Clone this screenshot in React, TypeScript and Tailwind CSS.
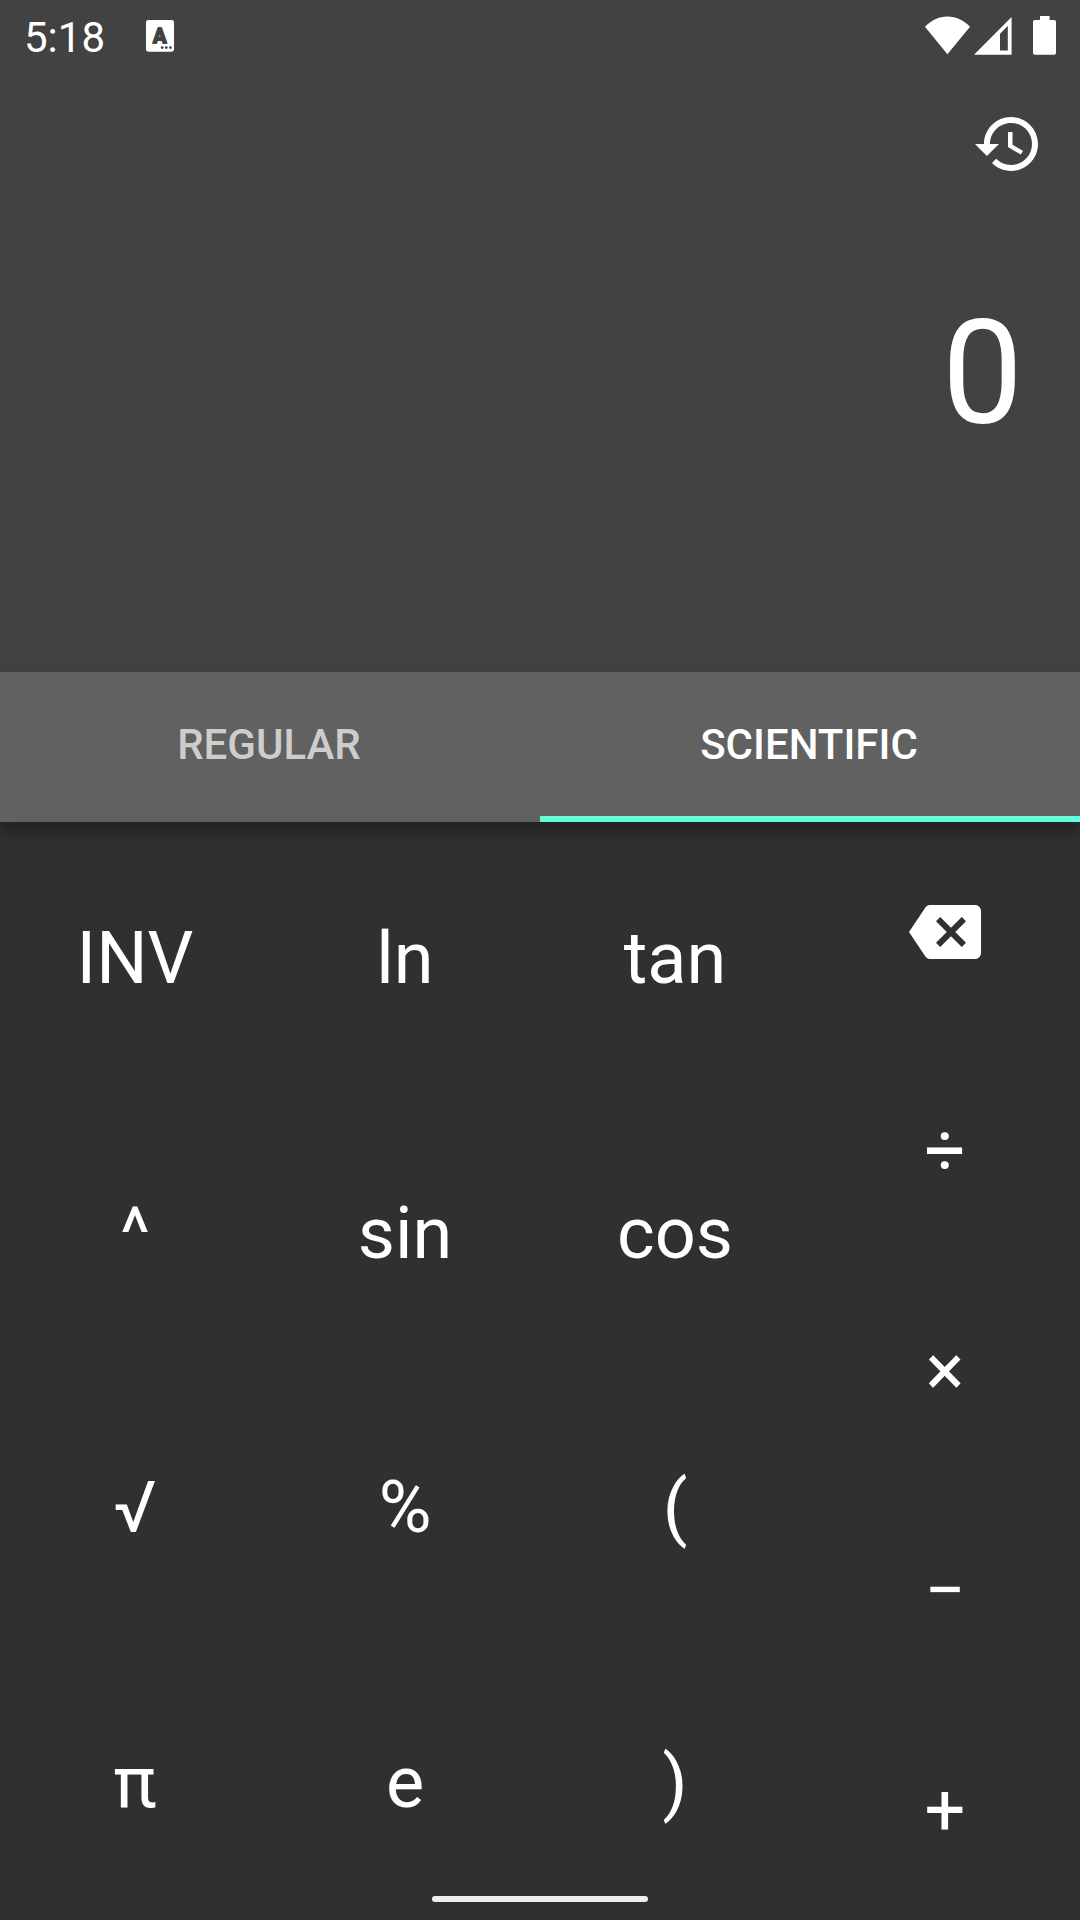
import type { ReactNode } from "react";

const functionKeys = [
  "INV", "ln", "tan",
  "^", "sin", "cos",
  "√", "%", "(",
  "π", "e", ")",
];

const operatorKeys = ["÷", "×", "−", "+"];

function Key({ children, label }: { children: ReactNode; label?: string }) {
  return (
    <button aria-label={label} className="flex items-center justify-center">
      {children}
    </button>
  );
}

function KeyboardIndicator() {
  return (
    <svg className="h-8 w-7" viewBox="0 0 28 32" fill="#424242">
      <rect width="28" height="31.7" rx="2.4" fill="white" />
      <text
        x="13.8"
        y="22.8"
        textAnchor="middle"
        stroke="#424242"
        strokeWidth="1.8"
        strokeLinejoin="round"
        className="text-[20px] font-bold"
      >
        A
      </text>
      <circle cx="16.2" cy="27.6" r="1.4" />
      <circle cx="20.3" cy="27.6" r="1.4" />
      <circle cx="24.4" cy="27.6" r="1.4" />
    </svg>
  );
}

function StatusIcons() {
  return (
    <svg className="h-[42px] w-[132px]" viewBox="924 15 132 42" fill="white">
      <path d="M925 26.7C931 20.5 939 16.6 947.4 16.6S964 20.5 970 26.7L947.4 54.2Z" />
      <path
        fillRule="evenodd"
        d="M1011.6 17V54.7H974ZM1000 33.7V50.4H1007.8V26Z"
      />
      <path d="M1040 16H1049.6V20H1054.2Q1056 20 1056 21.8V53Q1056 54.8 1054.2 54.8H1034.8Q1033 54.8 1033 53V21.8Q1033 20 1034.8 20H1040Z" />
    </svg>
  );
}

function HistoryIcon() {
  return (
    <svg className="size-[72px]" viewBox="0 0 24 24" fill="white">
      <path d="M13 3c-4.97 0-9 4.03-9 9H1l3.89 3.89.07.14L9 12H6c0-3.87 3.13-7 7-7s7 3.13 7 7-3.13 7-7 7c-1.93 0-3.68-.79-4.94-2.06l-1.42 1.42C8.27 19.99 10.51 21 13 21c4.97 0 9-4.03 9-9s-4.03-9-9-9zm-1 5v5l4.28 2.54.72-1.21-3.5-2.08V8H12z" />
    </svg>
  );
}

function BackspaceIcon() {
  return (
    <svg className="size-[72px]" viewBox="0 0 24 24" fill="white">
      <path d="M22 3H7c-.69 0-1.23.35-1.59.88L0 12l5.41 8.11c.36.53.9.89 1.59.89h15c1.1 0 2-.9 2-2V5c0-1.1-.9-2-2-2zm-3 12.59L17.59 17 14 13.41 10.41 17 9 15.59 12.59 12 9 8.41 10.41 7 14 10.59 17.59 7 19 8.41 15.41 12 19 15.59z" />
    </svg>
  );
}

export default function App() {
  return (
    <div className="relative flex h-[1920px] w-[1080px] flex-col overflow-hidden bg-[#303030] font-['Roboto',sans-serif] text-white">
      <header className="flex h-[672px] flex-col bg-[#424242]">
        <div className="flex h-[72px] items-center justify-between pr-6 pl-6">
          <div className="flex items-center gap-[41px]">
            <span className="w-[81px] pt-1 text-[42px] leading-[50px]">
              5:18
            </span>
            <KeyboardIndicator />
          </div>
          <StatusIcons />
        </div>
        <div className="flex justify-end pt-9 pr-9">
          <button aria-label="History">
            <HistoryIcon />
          </button>
        </div>
        <div className="flex justify-end pt-[108px] pr-[57px] text-[144px] leading-[172px]">
          0
        </div>
      </header>

      <nav className="relative z-10 grid h-[150px] grid-cols-2 bg-[#616161] text-[42px] font-medium shadow-[0_9px_16px_rgba(0,0,0,0.3)]">
        <button className="border-b-[6px] border-transparent pr-[2px] text-white/70">
          REGULAR
        </button>
        <button className="border-b-[6px] border-[#64ffda] pr-[2px]">
          SCIENTIFIC
        </button>
      </nav>

      <main className="flex h-[1098px] text-[72px] leading-[84px]">
        <section className="grid w-[810px] grid-cols-3 grid-rows-4">
          {functionKeys.map((key) => (
            <Key key={key}>{key}</Key>
          ))}
        </section>
        <section className="grid w-[270px] grid-rows-5">
          <Key label="Backspace">
            <BackspaceIcon />
          </Key>
          {operatorKeys.map((key) => (
            <Key key={key}>{key}</Key>
          ))}
        </section>
      </main>

      <div className="absolute bottom-[18px] left-[432px] h-1.5 w-[216px] rounded-full bg-[#eeeeee]" />
    </div>
  );
}
